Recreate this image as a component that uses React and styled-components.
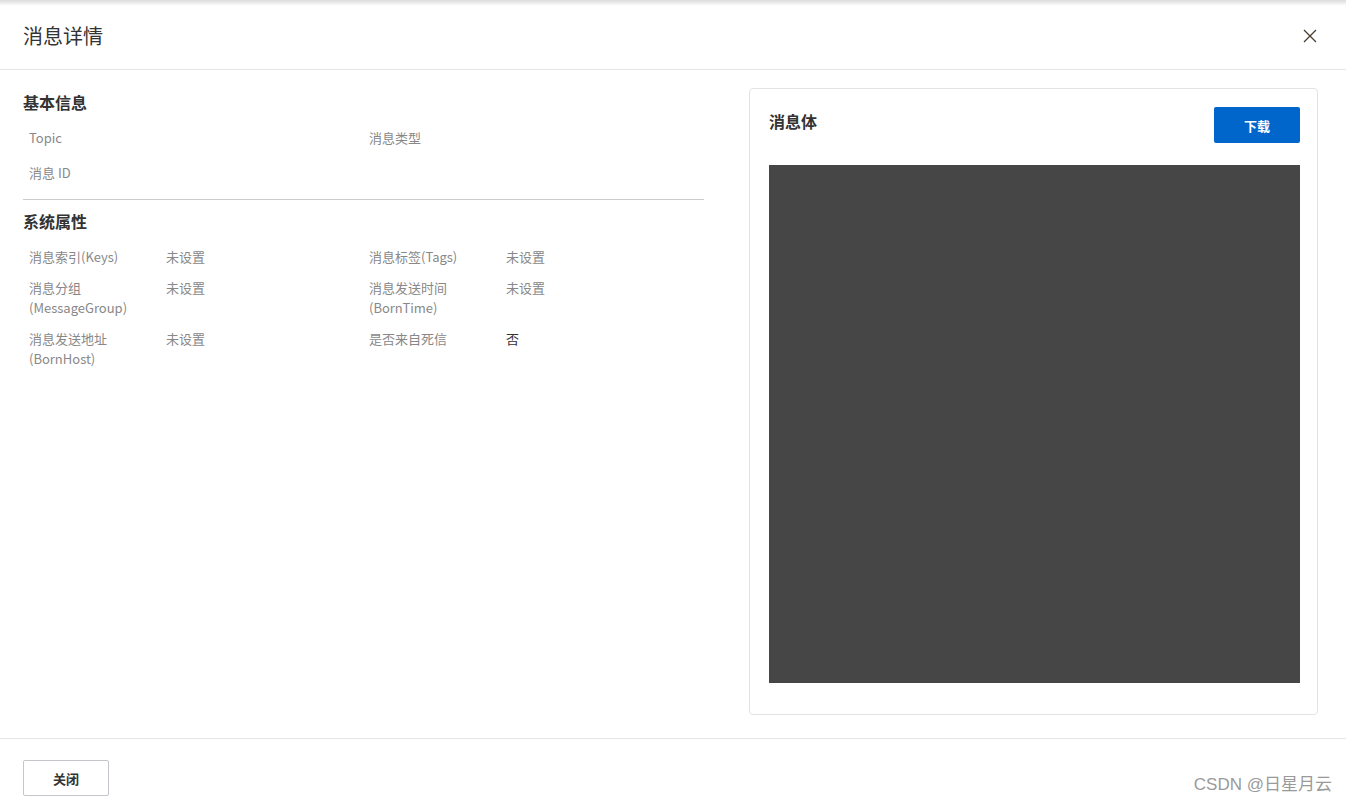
import React from "react";
import styled, { createGlobalStyle } from "styled-components";

const GlobalStyle = createGlobalStyle`
  html, body { margin: 0; padding: 0; background: #fff; }
  body { font-family: "Noto Sans CJK SC", "Noto Sans", "Liberation Sans", sans-serif; color: #333; }
  * { box-sizing: border-box; }
`;

const Page = styled.div`
  position: relative;
  width: 1346px;
  height: 803px;
  display: flex;
  flex-direction: column;
  background: #fff;
  overflow: hidden;
  &::before {
    content: "";
    position: absolute;
    left: 0; right: 0; top: 0;
    height: 6px;
    background: linear-gradient(#dcdcdc, rgba(255,255,255,0));
    pointer-events: none;
  }
`;

const Header = styled.header`
  height: 70px;
  flex: none;
  display: flex;
  align-items: center;
  justify-content: space-between;
  padding: 0 28px 0 23px;
  border-bottom: 1px solid #e6e6e6;
`;

const Title = styled.h1`
  margin: 0;
  padding-top: 2px;
  font-size: 20px;
  font-weight: 400;
  color: #333;
  line-height: 28px;
`;

const CloseButton = styled.button`
  border: 0;
  background: none;
  padding: 0;
  width: 16px;
  height: 16px;
  display: flex;
  align-items: center;
  justify-content: center;
  cursor: pointer;
  margin-top: 2px;
`;

const Body = styled.main`
  flex: 1;
  display: flex;
  gap: 45px;
  padding: 18px 28px 23px 23px;
  min-height: 0;
`;

const LeftCol = styled.section`
  width: 681px;
  flex: none;
  padding-top: 2px;
`;

const SectionTitle = styled.h2`
  margin: 0;
  font-size: 16px;
  font-weight: 700;
  line-height: 24px;
  color: #333;
`;

const Grid = styled.div`
  display: grid;
  grid-template-columns: 340px 340px;
  row-gap: ${(p) => p.$rowGap}px;
  padding-left: 6px;
  margin-top: 14px;
`;

const Item = styled.div`
  display: flex;
  font-size: 13px;
  line-height: 20px;
`;

const Label = styled.div`
  width: 137px;
  flex: none;
  color: #888;
  padding-right: 8px;
`;

const Value = styled.div`
  color: ${(p) => (p.$dark ? "#333" : "#888")};
`;

const Divider = styled.hr`
  border: 0;
  border-top: 1px solid #cccccc;
  margin: 16px 0 9px 0;
`;

const Card = styled.section`
  flex: 1;
  border: 1px solid #e3e3e3;
  border-radius: 4px;
  padding: 18px 17px 31px 19px;
  display: flex;
  flex-direction: column;
`;

const CardHead = styled.div`
  display: flex;
  justify-content: space-between;
  align-items: flex-start;
`;

const CardTitle = styled.h3`
  margin: 0;
  font-size: 16px;
  font-weight: 700;
  line-height: 28px;
  color: #333;
`;

const PrimaryButton = styled.button`
  width: 86px;
  height: 36px;
  border: 0;
  border-radius: 2px;
  background: #0066cc;
  color: #fff;
  font-family: inherit;
  font-size: 13px;
  font-weight: 700;
  cursor: pointer;
`;

const CodeArea = styled.div`
  margin-top: 22px;
  flex: 1;
  background: #464646;
`;

const Footer = styled.footer`
  height: 65px;
  flex: none;
  border-top: 1px solid #e6e6e6;
  padding: 21px 23px 0;
`;

const SecondaryButton = styled.button`
  width: 86px;
  height: 36px;
  border: 1px solid #c4c6cc;
  border-radius: 2px;
  background: #fff;
  color: #333;
  font-family: inherit;
  font-size: 13px;
  font-weight: 700;
  cursor: pointer;
`;

const Watermark = styled.div`
  position: absolute;
  right: 14px;
  bottom: 7px;
  font-size: 17px;
  line-height: 22px;
  color: #9a9a9a;
  font-family: "Liberation Sans", "Noto Sans CJK SC", sans-serif;
`;

const basic = [
  ["Topic", ""],
  ["消息类型", ""],
  ["消息 ID", ""],
];

const system = [
  ["消息索引(Keys)", "未设置"],
  ["消息标签(Tags)", "未设置"],
  ["消息分组(MessageGroup)", "未设置"],
  ["消息发送时间(BornTime)", "未设置"],
  ["消息发送地址(BornHost)", "未设置"],
  ["是否来自死信", "否", true],
];

function splitLabel(l) {
  const i = l.indexOf("(");
  if (i > 0 && l.length > 10) {
    return (
      <>
        {l.slice(0, i)}
        <br />
        {l.slice(i)}
      </>
    );
  }
  return l;
}

export default function App() {
  return (
    <>
      <GlobalStyle />
      <Page>
        <Header>
          <Title>消息详情</Title>
          <CloseButton aria-label="close">
            <svg width="14" height="14" viewBox="0 0 14 14">
              <path d="M1 1 L13 13 M13 1 L1 13" stroke="#4a3d2e" strokeWidth="1.3" fill="none" />
            </svg>
          </CloseButton>
        </Header>
        <Body>
          <LeftCol>
            <SectionTitle>基本信息</SectionTitle>
            <Grid $rowGap={15}>
              {basic.map(([l, v]) => (
                <Item key={l}>
                  <Label>{l}</Label>
                  <Value>{v}</Value>
                </Item>
              ))}
            </Grid>
            <Divider />
            <SectionTitle>系统属性</SectionTitle>
            <Grid $rowGap={11}>
              {system.map(([l, v, dark]) => (
                <Item key={l}>
                  <Label>{splitLabel(l)}</Label>
                  <Value $dark={dark}>{v}</Value>
                </Item>
              ))}
            </Grid>
          </LeftCol>
          <Card>
            <CardHead>
              <CardTitle>消息体</CardTitle>
              <PrimaryButton>下载</PrimaryButton>
            </CardHead>
            <CodeArea />
          </Card>
        </Body>
        <Footer>
          <SecondaryButton>关闭</SecondaryButton>
        </Footer>
        <Watermark>CSDN @日星月云</Watermark>
      </Page>
    </>
  );
}
